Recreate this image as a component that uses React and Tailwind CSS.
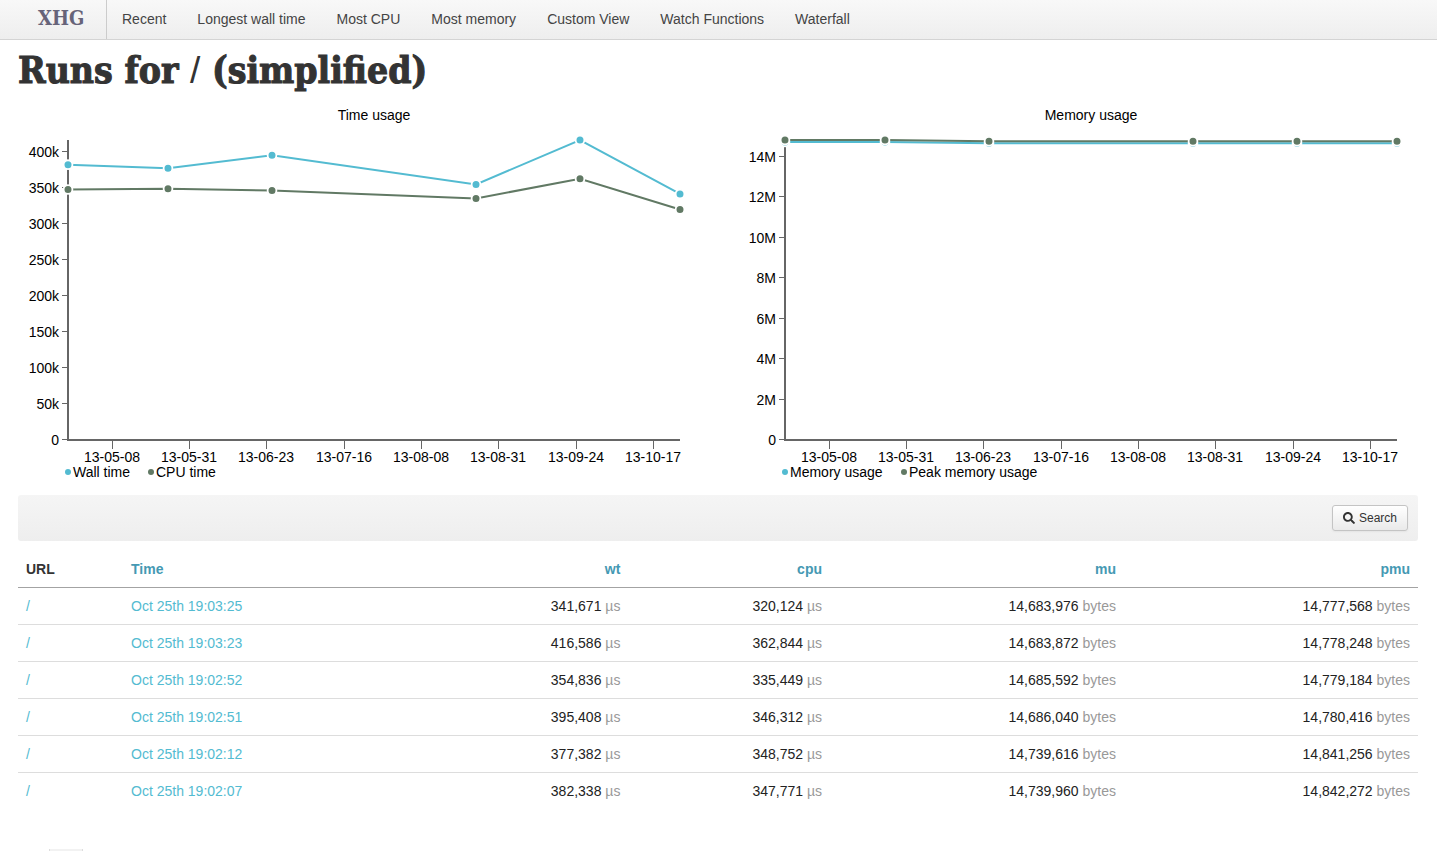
import { FaSearch } from 'react-icons/fa';
import clsx from 'clsx';

const BLUE = '#53bbd1';
const GREEN = '#617964';

const navItems = ['Recent', 'Longest wall time', 'Most CPU', 'Most memory', 'Custom View', 'Watch Functions', 'Waterfall'];

const runs = [
  { time: 'Oct 25th 19:03:25', wt: 341671, cpu: 320124, mu: 14683976, pmu: 14777568 },
  { time: 'Oct 25th 19:03:23', wt: 416586, cpu: 362844, mu: 14683872, pmu: 14778248 },
  { time: 'Oct 25th 19:02:52', wt: 354836, cpu: 335449, mu: 14685592, pmu: 14779184 },
  { time: 'Oct 25th 19:02:51', wt: 395408, cpu: 346312, mu: 14686040, pmu: 14780416 },
  { time: 'Oct 25th 19:02:12', wt: 377382, cpu: 348752, mu: 14739616, pmu: 14841256 },
  { time: 'Oct 25th 19:02:07', wt: 382338, cpu: 347771, mu: 14739960, pmu: 14842272 },
];

const columns = [
  { key: 'wt', unit: 'µs' },
  { key: 'cpu', unit: 'µs' },
  { key: 'mu', unit: 'bytes' },
  { key: 'pmu', unit: 'bytes' },
];

// plot area inside the chart
const LEFT = 50;
const TOP = 40;
const WIDTH = 612;
const HEIGHT = 300;
const BOTTOM = TOP + HEIGHT;

// x positions, oldest run first
const pointX = [0, 100, 204, 408, 512, 612];
const dateTicks = [
  [44, '13-05-08'],
  [121, '13-05-31'],
  [198, '13-06-23'],
  [276, '13-07-16'],
  [353, '13-08-08'],
  [430, '13-08-31'],
  [508, '13-09-24'],
  [585, '13-10-17'],
];

const timeTicks = [0, 50, 100, 150, 200, 250, 300, 350, 400].map((n) => [n * 1000, n ? `${n}k` : '0']);
const memoryTicks = [0, 2, 4, 6, 8, 10, 12, 14].map((n) => [n * 1000000, n ? `${n}M` : '0']);

function LineChart({ title, ticks, series }) {
  const history = [...runs].reverse();
  const max = Math.max(...series.flatMap((s) => history.map((run) => run[s.key])));
  const y = (value) => BOTTOM - (value / max) * HEIGHT;

  return (
    <svg viewBox="0 0 683 385" className="block w-full h-auto text-sm" role="img" aria-label={title}>
      <text x={LEFT + WIDTH / 2} y={20} textAnchor="middle">{title}</text>

      <g stroke="#666" shapeRendering="crispEdges">
        <line x1={LEFT} x2={LEFT} y1={TOP} y2={BOTTOM + 1} strokeWidth="2" />
        <line x1={LEFT} x2={LEFT + WIDTH} y1={BOTTOM} y2={BOTTOM} strokeWidth="2" />
        {ticks.map(([value]) => (
          <line key={value} x1={LEFT - 6} x2={LEFT} y1={Math.round(y(value)) - 0.5} y2={Math.round(y(value)) - 0.5} />
        ))}
        {dateTicks.map(([x]) => (
          <line key={x} x1={LEFT + x + 0.5} x2={LEFT + x + 0.5} y1={BOTTOM} y2={BOTTOM + 9} />
        ))}
      </g>

      {ticks.map(([value, label]) => (
        <text key={value} x={LEFT - 9} y={Math.round(y(value)) + 5} textAnchor="end">{label}</text>
      ))}
      {dateTicks.map(([x, label]) => (
        <text key={x} x={LEFT + x} y={BOTTOM + 22} textAnchor="middle">{label}</text>
      ))}

      {series.map((s) => (
        <g key={s.key}>
          <polyline
            points={history.map((run, i) => `${LEFT + pointX[i]},${y(run[s.key])}`).join(' ')}
            fill="none"
            stroke={s.color}
            strokeWidth="2"
          />
          {history.map((run, i) => (
            <circle key={run.time} cx={LEFT + pointX[i]} cy={y(run[s.key])} r="4.4" fill={s.color} stroke="#fff" strokeWidth="1.8" />
          ))}
          <circle cx={LEFT + s.legendX} cy={BOTTOM + 32} r="3" fill={s.color} />
          <text x={LEFT + s.legendX + 5} y={BOTTOM + 37}>{s.label}</text>
        </g>
      ))}
    </svg>
  );
}

export default function App() {
  return (
    <div className="min-h-screen bg-white font-['Liberation_Sans',Arial,sans-serif] text-sm text-black">
      <header className="flex h-10 items-stretch border-b border-[#d4d4d4] bg-linear-to-b from-[#f8f8f8] to-[#eeeeee]">
        <a
          href="#"
          className="flex w-[107px] items-center border-r border-[#ccc] pb-1 pl-[38px] font-['DejaVu_Serif_Condensed','DejaVu_Serif',serif] text-xl leading-5 font-bold text-[#666379]"
        >
          XHG
        </a>
        <nav className="flex items-center gap-px pb-0.5">
          {navItems.map((item) => (
            <a key={item} href="#" className="px-[15px] text-[#444]">{item}</a>
          ))}
        </nav>
      </header>

      <main className="pr-[19px] pl-[18px]">
        <h1 className="h-[60px] pt-[10px] font-['DejaVu_Serif_Condensed','DejaVu_Serif',serif] text-[37px] leading-10 font-bold text-[#333] [-webkit-text-stroke:1px_#333]">
          Runs for{' '}
          <span className="font-['Liberation_Sans',Arial,sans-serif] font-normal [-webkit-text-stroke:0]">/</span>{' '}
          (simplified)
        </h1>

        <div className="grid grid-cols-2 gap-[34px]">
          <LineChart
            title="Time usage"
            ticks={timeTicks}
            series={[
              { key: 'wt', label: 'Wall time', color: BLUE, legendX: 0 },
              { key: 'cpu', label: 'CPU time', color: GREEN, legendX: 83 },
            ]}
          />
          <LineChart
            title="Memory usage"
            ticks={memoryTicks}
            series={[
              { key: 'mu', label: 'Memory usage', color: BLUE, legendX: 0 },
              { key: 'pmu', label: 'Peak memory usage', color: GREEN, legendX: 119 },
            ]}
          />
        </div>

        {/* Search bar */}
        <div className="mt-[10px] mb-[10px] flex justify-end rounded-[3px] bg-linear-to-b from-[#f5f5f5] to-[#eeeeee] p-[10px]">
          <button
            type="button"
            className="flex h-[26px] items-center gap-1 rounded-[3px] border border-[#c4c4c4] bg-linear-to-b from-white to-[#eaeaea] px-[10px] text-xs text-[#333] shadow-xs"
          >
            <FaSearch className="size-3" /> Search
          </button>
        </div>

        <table className="w-full table-fixed border-collapse leading-5">
          <colgroup>
            <col className="w-[7.5%]" />
            <col className="w-[20%]" />
            <col className="w-[16.1%]" />
            <col className="w-[14.4%]" />
            <col className="w-[21%]" />
            <col className="w-[21%]" />
          </colgroup>
          <thead>
            <tr>
              <th className="p-2 text-left text-[#333]">URL</th>
              <th className="p-2 text-left"><a href="#" className="text-[#4599b3]">Time</a></th>
              {columns.map((col) => (
                <th key={col.key} className="p-2 text-right"><a href="#" className="text-[#4599b3]">{col.key}</a></th>
              ))}
            </tr>
          </thead>
          <tbody>
            {runs.map((run, i) => (
              <tr key={run.time} className={clsx('border-t', i === 0 ? 'border-[#a3a3a3]' : 'border-[#ddd]')}>
                <td className="p-2"><a href="#" className="text-[#53bbd1]">/</a></td>
                <td className="p-2"><a href="#" className="text-[#53bbd1]">{run.time}</a></td>
                {columns.map((col) => (
                  <td key={col.key} className="p-2 text-right text-[#222]">
                    {run[col.key].toLocaleString('en-US')} <span className="text-[#999]">{col.unit}</span>
                  </td>
                ))}
              </tr>
            ))}
          </tbody>
        </table>

        {/* Top edge of the pager */}
        <div className="mt-10 ml-[31px] h-0.5 w-[34px] border-x border-[#ddd] bg-[#f2f2f2]" />
      </main>
    </div>
  );
}
